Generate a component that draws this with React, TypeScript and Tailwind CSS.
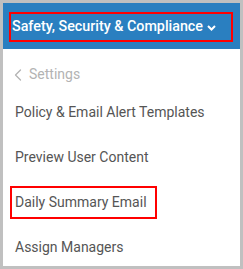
import { ChevronLeft } from "lucide-react";

const items = [
  "Policy & Email Alert Templates",
  "Preview User Content",
  "Daily Summary Email",
  "Assign Managers",
];

export default function App() {
  return (
    <div
      className="w-[243px] h-[269px] border-[3px] border-[#c0c0c0] bg-white flex flex-col overflow-hidden"
      style={{ fontFamily: "Roboto, 'Liberation Sans', sans-serif" }}
    >
      <header className="h-[46px] shrink-0 bg-[#2a7fc0] pl-[6px] pt-[9px]">
        <div className="w-[224px] h-[30px] border-2 border-[#ff0000] flex items-center pl-[1px] text-white text-[14.3px] font-medium">
          <span>Safety, Security &amp; Compliance</span>
          <svg width="9" height="6" viewBox="0 0 9 6" className="ml-[4px] mt-[2px]">
            <path d="M1 1l3.5 3.5L8 1" fill="none" stroke="white" strokeWidth="2" />
          </svg>
        </div>
      </header>

      <main className="flex flex-col shrink-0">
        <div className="h-[41px] shrink-0 pt-[10px] flex items-center pl-[10px] text-[14px] text-[#b3b3b3]">
          <ChevronLeft className="w-[20px] h-[20px] mr-[1px] -ml-[5px]" strokeWidth={1.5} />
          <span>Settings</span>
        </div>
        {items.map((label) => (
          <div key={label} className="h-[45px] shrink-0 flex items-center pl-[7px] text-[14px] text-[#555]">
            {label === "Daily Summary Email" ? (
              <span className="h-[33px] w-[147px] border-2 border-[#ff0000] flex items-center pl-[3px]">
                {label}
              </span>
            ) : (
              <span className="pl-[5px]">{label}</span>
            )}
          </div>
        ))}
      </main>
    </div>
  );
}
